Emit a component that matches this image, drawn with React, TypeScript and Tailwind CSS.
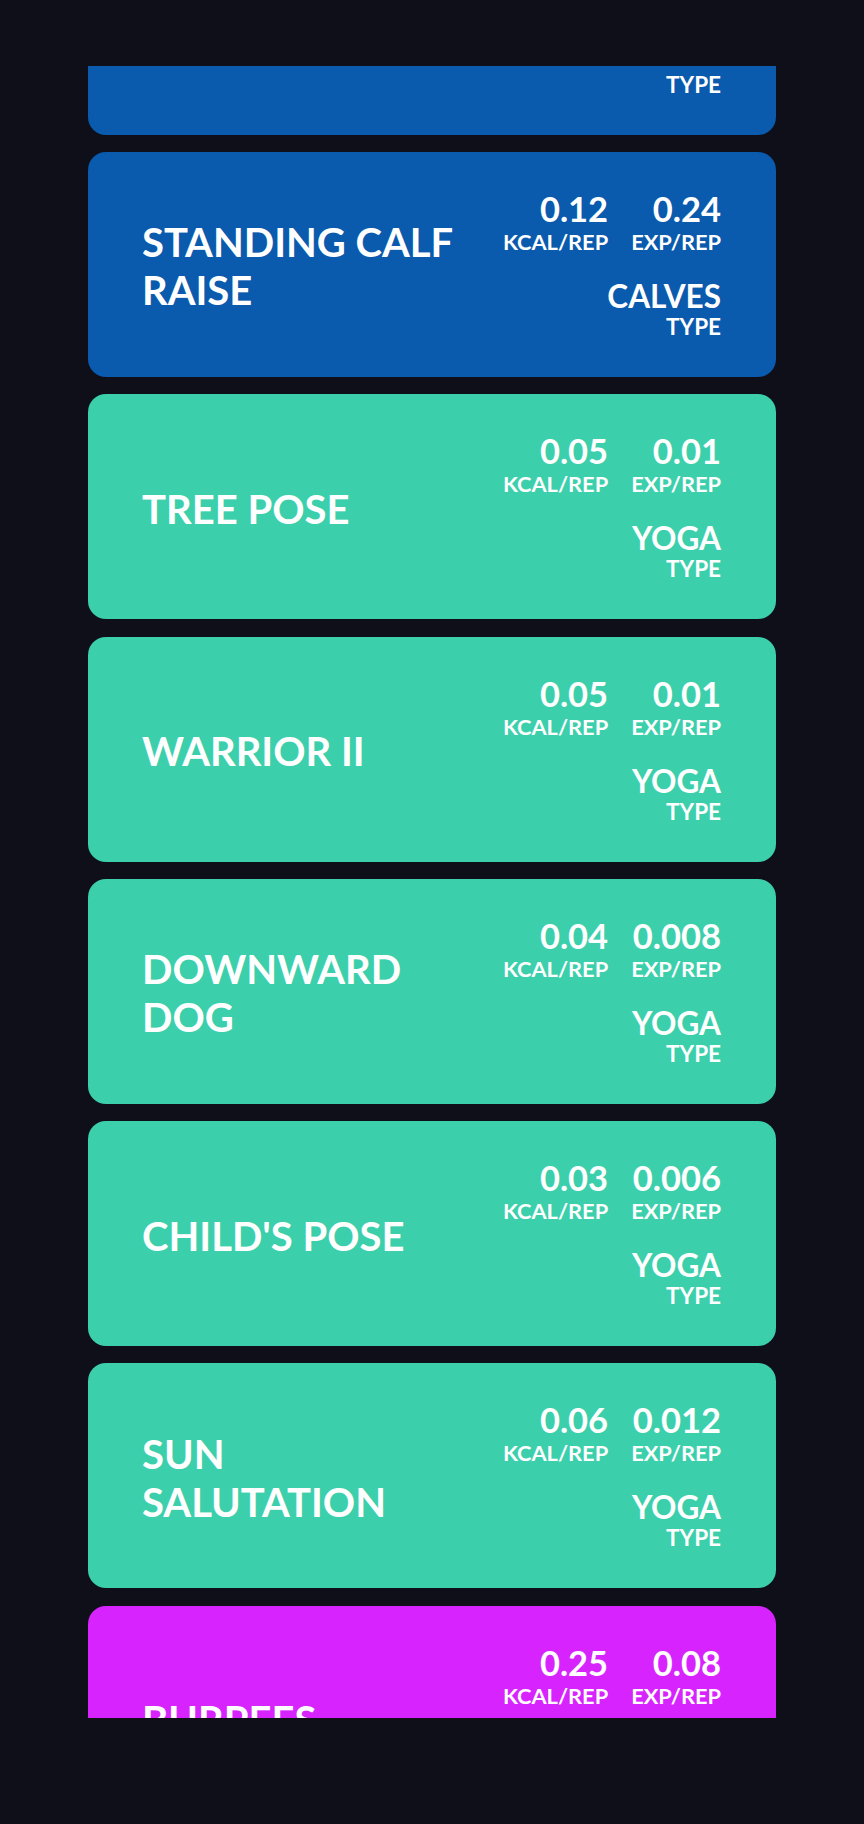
import React from "react";

type Item = {
  name: string;
  kcal: string;
  exp: string;
  type: string;
  color: "blue" | "teal" | "magenta";
};

const items: Item[] = [
  { name: "SEATED CALF RAISE", kcal: "0.10", exp: "0.20", type: "CALVES", color: "blue" },
  { name: "STANDING CALF RAISE", kcal: "0.12", exp: "0.24", type: "CALVES", color: "blue" },
  { name: "TREE POSE", kcal: "0.05", exp: "0.01", type: "YOGA", color: "teal" },
  { name: "WARRIOR II", kcal: "0.05", exp: "0.01", type: "YOGA", color: "teal" },
  { name: "DOWNWARD DOG", kcal: "0.04", exp: "0.008", type: "YOGA", color: "teal" },
  { name: "CHILD'S POSE", kcal: "0.03", exp: "0.006", type: "YOGA", color: "teal" },
  { name: "SUN SALUTATION", kcal: "0.06", exp: "0.012", type: "YOGA", color: "teal" },
  { name: "BURPEES", kcal: "0.25", exp: "0.08", type: "CARDIO", color: "magenta" },
];

const bg: Record<Item["color"], string> = {
  blue: "bg-[#0a5aad]",
  teal: "bg-[#3ccfac]",
  magenta: "bg-[#d724fe]",
};

function Stat({ value, label }: { value: string; label: string }) {
  return (
    <div className="flex flex-col items-end">
      <div className="text-[34.5px] leading-[36px] font-bold">{value}</div>
      <div className="text-[21.8px] leading-[30px] font-bold">{label}</div>
    </div>
  );
}

function Card({ item }: { item: Item }) {
  return (
    <div
      className={`${bg[item.color]} rounded-[18px] flex items-center gap-10 pl-[54px] pr-[55px] pt-[39px] pb-[35px] text-white shrink-0`}
    >
      <div className="flex-1 min-w-0 text-[40px] leading-[48px] font-bold">{item.name}</div>
      <div className="flex flex-col items-end">
        <div className="flex gap-[23px]">
          <Stat value={item.kcal} label="KCAL/REP" />
          <Stat value={item.exp} label="EXP/REP" />
        </div>
        <div className="mt-[23px] flex flex-col items-end">
          <div className="text-[31.5px] leading-[32px] font-bold">{item.type}</div>
          <div className="text-[22.5px] leading-[30px] font-bold">TYPE</div>
        </div>
      </div>
    </div>
  );
}

export default function App() {
  return (
    <div
      className="min-h-screen bg-[#0e0f18] px-[88px] pt-[66px]"
      style={{ fontFamily: "Lato, 'Noto Sans', sans-serif" }}
    >
      <div className="h-[1652px] overflow-hidden">
        <div className="flex flex-col gap-[17.28px] mt-[-156.3px]">
          {items.map((it, i) => (
            <Card key={i} item={it} />
          ))}
        </div>
      </div>
    </div>
  );
}
